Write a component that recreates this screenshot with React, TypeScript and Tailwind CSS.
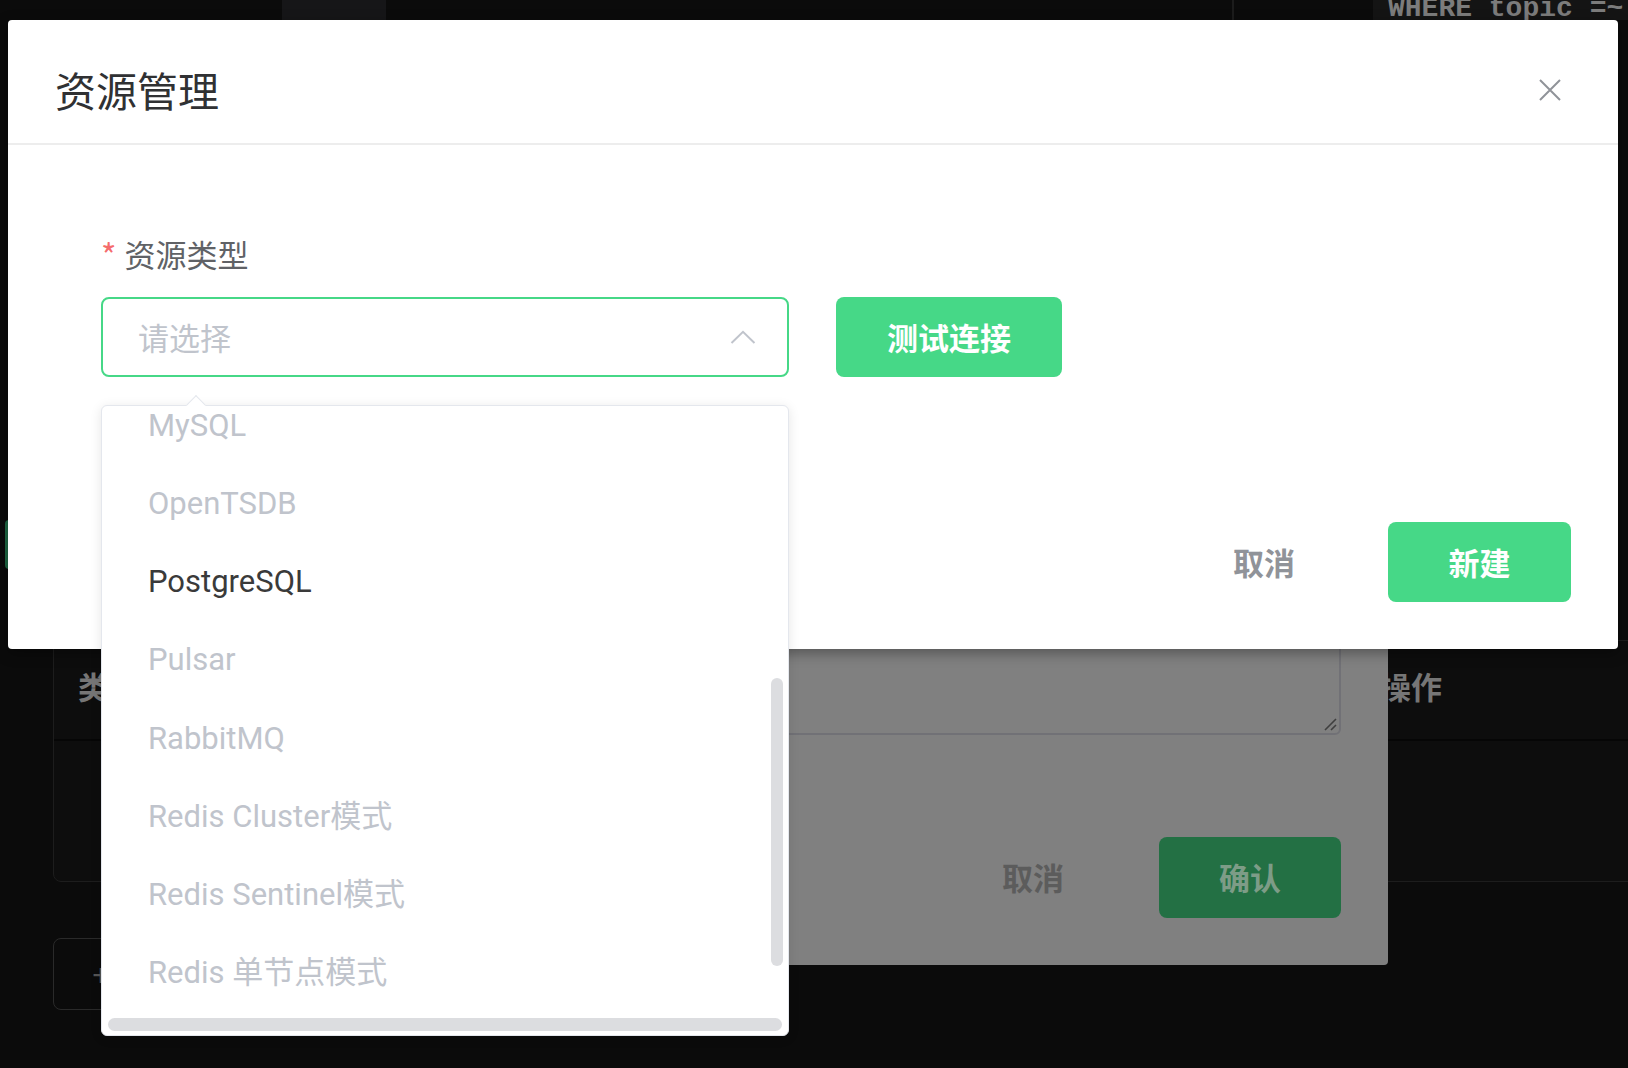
import React from "react";

type Option = { label: string; disabled?: boolean };

const OPTIONS: Option[] = [
  { label: "MySQL", disabled: true },
  { label: "OpenTSDB", disabled: true },
  { label: "PostgreSQL" },
  { label: "Pulsar", disabled: true },
  { label: "RabbitMQ", disabled: true },
  { label: "Redis Cluster模式", disabled: true },
  { label: "Redis Sentinel模式", disabled: true },
  { label: "Redis 单节点模式", disabled: true },
];

function CloseIcon() {
  return (
    <svg width="24" height="24" viewBox="0 0 24 24" fill="none">
      <path d="M2 2L22 22M22 2L2 22" stroke="#909399" strokeWidth="2" />
    </svg>
  );
}

function ChevronUp() {
  return (
    <svg width="26" height="14" viewBox="0 0 26 14" fill="none">
      <path d="M1.5 13L13 1.8L24.5 13" stroke="#c0c4cc" strokeWidth="2" />
    </svg>
  );
}

/** Page behind the overlay, already darkened */
function BackgroundPage() {
  return (
    <div className="flex h-full flex-col">
      <div className="flex h-[20px] shrink-0">
        <div className="w-[282px]" />
        <div className="w-[104px] bg-[#161618]" />
        <div className="w-[846px]" />
        <div className="w-[2px] bg-[#1c1c1c]" />
        <div className="w-[139px]" />
        <div className="flex-1 overflow-hidden bg-[#141414] pl-[15px]">
          <div className="-mt-[5px] whitespace-nowrap font-['Liberation_Mono',monospace] text-[28px] font-bold leading-[28px] text-[#7c7c7c]">
            WHERE topic =~
          </div>
        </div>
      </div>

      <div className="ml-[5px] mt-[500px] h-[49px] w-[200px] shrink-0 rounded-[4px] bg-[#1f6a45]" />

      <div className="ml-[53px] mt-[71px] flex w-[1700px] shrink-0 flex-col rounded-[8px] border border-[#1d1d1d] bg-[#0d0d0d]">
        <div className="flex h-[100px] items-center border-b-2 border-[#060606] pb-[8px] font-['Noto_Sans_CJK_SC',sans-serif] text-[31px] font-bold text-[#767676]">
          <div className="w-[1326px] pl-[24px]">类型</div>
          <div>操作</div>
        </div>
        <div className="h-[140px]" />
      </div>

      <div className="ml-[53px] mt-[56px] flex h-[72px] w-[300px] shrink-0 items-center rounded-[8px] border border-[#2a2a2a] pl-[38px] text-[31px] text-[#555]">
        +
      </div>
    </div>
  );
}

/** Dimmed dialog lying under the active one */
function DimmedDialog() {
  return (
    <div className="absolute left-[300px] top-[300px] flex h-[665px] w-[1088px] flex-col rounded-b-[4px] bg-[#808080] pr-[47px] font-['Noto_Sans_CJK_SC',sans-serif]">
      <div className="relative ml-[60px] mt-[305px] h-[130px] rounded-[6px] border-2 border-[#717176]">
        <svg className="absolute bottom-[2px] right-[2px]" width="14" height="14" viewBox="0 0 14 14">
          <path d="M2 13L13 2M8 13L13 8" stroke="#3f3f3f" strokeWidth="1.6" />
        </svg>
      </div>
      <div className="mt-[102px] flex items-center justify-end gap-[95px]">
        <span className="text-[31px] font-bold text-[#5c5c5c]">取消</span>
        <div className="flex h-[81px] w-[182px] items-center justify-center rounded-[8px] bg-[#237044] text-[31px] font-bold text-[#7d9c87]">
          确认
        </div>
      </div>
    </div>
  );
}

function TypeDropdown() {
  return (
    <div className="absolute left-[101px] top-[405px] h-[631px] w-[688px] rounded-[6px] border border-[#e4e7ed] bg-white shadow-[0_2px_12px_rgba(0,0,0,0.1)]">
      <div className="absolute left-[87px] top-[-8px] h-[14px] w-[14px] rotate-45 border-l border-t border-[#e4e7ed] bg-white" />
      <div className="h-[606px] overflow-hidden rounded-t-[6px]">
        <ul className="-mt-[19px] font-['Roboto','Noto_Sans_CJK_SC',sans-serif] text-[31px]">
          {OPTIONS.map((o) => (
            <li
              key={o.label}
              className={
                "flex h-[78.2px] items-center whitespace-nowrap px-[46px] " +
                (o.disabled ? "text-[#c0c4cc]" : "text-[#3a3a3a]")
              }
            >
              {o.label}
            </li>
          ))}
        </ul>
      </div>
      <div className="absolute left-[669px] top-[272px] h-[288px] w-[12px] rounded-full bg-[#dcdde0]" />
      <div className="absolute left-[6px] top-[612px] h-[13px] w-[674px] rounded-full bg-[#dcdde0]" />
    </div>
  );
}

function ResourceDialog() {
  return (
    <div className="absolute left-[8px] top-[20px] flex h-[629px] w-[1610px] flex-col rounded-[4px] bg-white font-['Noto_Sans_CJK_SC',sans-serif] shadow-[0_4px_14px_rgba(0,0,0,0.35)]">
      <div className="flex items-center justify-between border-b-2 border-[#ededed] pb-[33px] pl-[47px] pr-[56px] pt-[49px]">
        <h2 className="text-[41px] leading-[41px] text-[#303133]">资源管理</h2>
        <CloseIcon />
      </div>

      <div className="flex flex-1 flex-col pl-[93px] pr-[47px] pt-[89px]">
        <div className="flex h-[40px] items-center">
          <span className="mr-[8px] text-[33px] leading-none text-[#f56c6c]">*</span>
          <span className="text-[31px] leading-[40px] text-[#606266]">资源类型</span>
        </div>

        <div className="mt-[23px] flex gap-[47px]">
          <div className="flex h-[80px] w-[688px] items-center justify-between rounded-[8px] border-2 border-[#46d887] pl-[35px] pr-[31px]">
            <span className="text-[31px] text-[#c0c4cc]">请选择</span>
            <ChevronUp />
          </div>
          <div className="flex h-[80px] w-[226px] items-center justify-center rounded-[8px] bg-[#46d887] text-[31px] font-bold text-white">
            测试连接
          </div>
        </div>

        <div className="mt-[145px] flex items-center justify-end gap-[93px]">
          <span className="text-[31px] font-bold text-[#909399]">取消</span>
          <div className="flex h-[80px] w-[183px] items-center justify-center rounded-[8px] bg-[#46d887] text-[31px] font-bold text-white">
            新建
          </div>
        </div>
      </div>
    </div>
  );
}

export default function App() {
  return (
    <div className="relative h-[1068px] w-[1628px] overflow-hidden bg-[#0b0b0b]">
      <BackgroundPage />
      <DimmedDialog />
      <ResourceDialog />
      <TypeDropdown />
    </div>
  );
}
